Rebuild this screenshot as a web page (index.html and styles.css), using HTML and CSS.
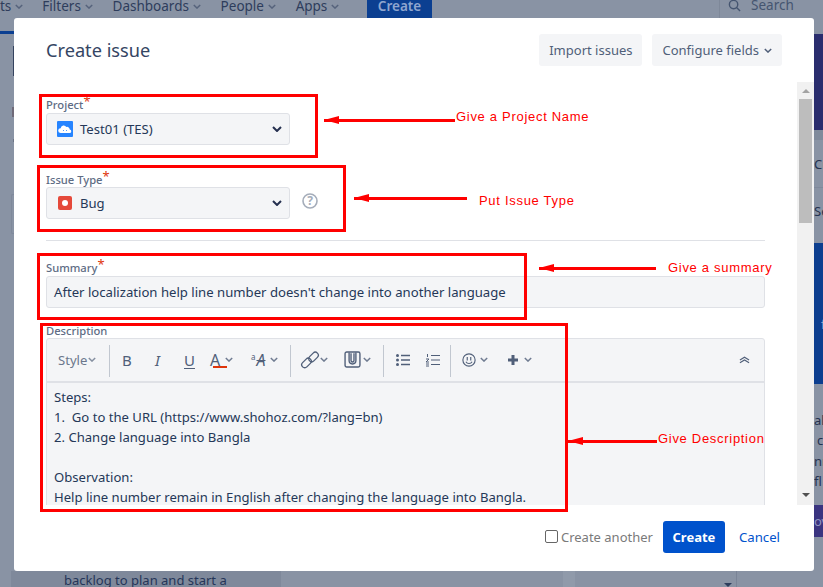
FILE: index.html
```html
<!DOCTYPE html>
<html lang="en">
<head>
<meta charset="utf-8">
<title>Create issue</title>
<link rel="stylesheet" href="styles.css">
</head>
<body>
<header class="topnav">
  <span class="navitem navfirst">ts <svg class="chev" viewBox="0 0 10 6"><path d="M1 1l4 4 4-4"/></svg></span>
  <span class="navitem">Filters <svg class="chev" viewBox="0 0 10 6"><path d="M1 1l4 4 4-4"/></svg></span>
  <span class="navitem">Dashboards <svg class="chev" viewBox="0 0 10 6"><path d="M1 1l4 4 4-4"/></svg></span>
  <span class="navitem">People <svg class="chev" viewBox="0 0 10 6"><path d="M1 1l4 4 4-4"/></svg></span>
  <span class="navitem">Apps <svg class="chev" viewBox="0 0 10 6"><path d="M1 1l4 4 4-4"/></svg></span>
  <span class="navcreate">Create</span>
  <span class="navsearch"><svg class="searchicon" viewBox="0 0 14 14"><circle cx="6" cy="6" r="4.5"/><path d="M9.5 9.5l3.5 3.5"/></svg>Search</span>
</header>
<div class="navline"></div>
<div class="bgbits">
  <span class="bit-left1"></span>
  <span class="bit-left2"></span>
  <span class="bit-left3"></span>
  <span class="bit-left4"></span>
  <span class="bit-panel1"></span>
  <span class="bit-band"></span>
  <span class="bit-text bit-c">Cr</span>
  <span class="bit-rule"></span>
  <span class="bit-text bit-s">Se</span>
  <span class="bit-panel2">f</span>
  <span class="bit-text bit-a">ali</span>
  <span class="bit-text bit-b">c</span>
  <span class="bit-text bit-d">nn</span>
  <span class="bit-text bit-e">fl</span>
  <span class="bit-panel3">ov</span>
  <span class="bit-card">backlog to plan and start a</span>
  <span class="bit-strip"></span>
  <span class="bit-scroll"></span>
  <span class="bit-arrow"></span>
</div>

<main class="modal">
  <div class="modal-head">
    <h1 class="title">Create issue</h1>
    <div class="head-actions">
      <button class="btn">Import issues</button>
      <button class="btn">Configure fields <svg class="chev chev-btn" viewBox="0 0 10 6"><path d="M1 1l4 4 4-4"/></svg></button>
    </div>
  </div>
  <div class="modal-body">
    <div class="form">
      <div class="label lab-project">Project<sup class="req">*</sup></div>
      <div class="select">
        <svg class="ficon" viewBox="0 0 16 16"><rect width="16" height="16" rx="1" fill="#2684ff"/><path d="M3.5 12a2.4 2.4 0 0 1 .2-4.800 3 3 0 0 1 5.600-1.200 2.600 2.600 0 0 1 3.400 2.600 1.700 1.700 0 0 1-.3 3.400z" fill="#fff"/><path d="M6 9.500h.8M9 9.500h.8" stroke="#2684ff" stroke-width="1"/></svg>
        <span class="value">Test01 (TES)</span>
        <svg class="selchev" viewBox="0 0 10 6"><path d="M1 1l4 4 4-4"/></svg>
      </div>
      <div class="label lab-type">Issue Type<sup class="req">*</sup></div>
      <div class="typerow">
        <div class="select">
          <svg class="ficon" viewBox="0 0 16 16"><rect width="14" height="14" x="1" y="1" rx="2" fill="#e5493a"/><circle cx="8" cy="8" r="3" fill="#fff"/></svg>
          <span class="value">Bug</span>
          <svg class="selchev" viewBox="0 0 10 6"><path d="M1 1l4 4 4-4"/></svg>
        </div>
        <svg class="help" viewBox="0 0 16 16"><circle cx="8" cy="8" r="7"/><text x="8" y="12" text-anchor="middle" class="helpq">?</text></svg>
      </div>
      <hr class="rule">
      <div class="label lab-summary">Summary<sup class="req">*</sup></div>
      <div class="input">After localization help line number doesn't change into another language</div>
      <div class="label lab-desc">Description</div>
      <div class="editor">
        <div class="toolbar">
          <span class="tool tool-style">Style<svg class="chev" viewBox="0 0 10 6"><path d="M1 1l4 4 4-4"/></svg></span>
          <i class="sep sep1"></i>
          <span class="tool t-b">B</span>
          <span class="tool t-i">I</span>
          <span class="tool t-u">U</span>
          <span class="tool t-a">A<svg class="chev" viewBox="0 0 10 6"><path d="M1 1l4 4 4-4"/></svg></span>
          <span class="tool t-s"><small>a</small><em>A</em><svg class="chev" viewBox="0 0 10 6"><path d="M1 1l4 4 4-4"/></svg></span>
          <i class="sep sep2"></i>
          <span class="tool t-link"><svg class="ticon link" viewBox="0 0 20 20"><rect x="1" y="10" width="11" height="6" rx="3" transform="rotate(-45 6.500 13)"/><rect x="8" y="4" width="11" height="6" rx="3" transform="rotate(-45 13.500 7)"/></svg><svg class="chev" viewBox="0 0 10 6"><path d="M1 1l4 4 4-4"/></svg></span>
          <span class="tool t-att"><svg class="ticon att" viewBox="0 0 16 16"><rect x="1" y="1" width="14" height="14" rx="1.500"/><path d="M4.800 1.500v7.500a3.200 3.200 0 0 0 6.400 0V1.500M6.600 2v7a1.400 1.400 0 0 0 2.800 0V2"/></svg><svg class="chev" viewBox="0 0 10 6"><path d="M1 1l4 4 4-4"/></svg></span>
          <i class="sep sep3"></i>
          <span class="tool t-ul"><svg class="ticon" viewBox="0 0 16 16"><path d="M6 3.500h9M6 8h9M6 12.500h9"/><circle cx="2.500" cy="3.500" r="1.500" class="dot"/><circle cx="2.500" cy="8" r="1.500" class="dot"/><circle cx="2.500" cy="12.500" r="1.500" class="dot"/></svg></span>
          <span class="tool t-ol"><svg class="ticon" viewBox="0 0 16 16"><path d="M6 3.500h9M6 8h9M6 12.500h9M2.500 2v3M1 7h3l-3 3h3M1 12h3M1 14h3" stroke-width="1"/></svg></span>
          <i class="sep sep4"></i>
          <span class="tool t-emo"><svg class="ticon emo" viewBox="0 0 16 16"><circle cx="8" cy="8" r="7"/><path d="M6 4.500v4M10 4.500v4M4.500 10a4 4 0 0 0 7 0"/></svg><svg class="chev" viewBox="0 0 10 6"><path d="M1 1l4 4 4-4"/></svg></span>
          <span class="tool t-plus"><svg class="ticon plus" viewBox="0 0 12 12"><path d="M6 1v10M1 6h10"/></svg><svg class="chev" viewBox="0 0 10 6"><path d="M1 1l4 4 4-4"/></svg></span>
          <span class="tool t-collapse"><svg class="ticon" viewBox="0 0 12 8"><path d="M1 4l5-3 5 3M1 7l5-3 5 3"/></svg></span>
        </div>
        <div class="content">
          <p>Steps:</p>
          <p>1.&nbsp; Go to the URL (https://www.shohoz.com/?lang=bn)</p>
          <p>2. Change language into Bangla</p>
          <p>&nbsp;</p>
          <p>Observation:</p>
          <p>Help line number remain in English after changing the language into Bangla.</p>
        </div>
      </div>
    </div>
    <div class="scrollbar">
      <span class="arrow-up"></span>
      <span class="thumb"></span>
      <span class="arrow-down"></span>
    </div>
  </div>
  <div class="modal-foot">
    <label class="another"><span class="check"></span>Create another</label>
    <button class="primary">Create</button>
    <a class="cancel">Cancel</a>
  </div>
</main>

<div class="box box-project"></div>
<div class="box box-type"></div>
<div class="box box-summary"></div>
<div class="box box-desc"></div>
<div class="arrow arrow-1"></div>
<div class="arrow arrow-2"></div>
<div class="arrow arrow-3"></div>
<div class="arrow arrow-4"></div>
<span class="note note-1">Give a Project Name</span>
<span class="note note-2">Put Issue Type</span>
<span class="note note-3">Give a summary</span>
<span class="note note-4">Give Description</span>
</body>
</html>
```
FILE: styles.css
```css
* { box-sizing: border-box; }
html, body { margin: 0; height: 100%; }
body {
  position: relative;
  width: 823px;
  height: 587px;
  overflow: hidden;
  background: #8993a4;
  font-family: "Noto Sans", "Open Sans", sans-serif;
  font-size: 13px;
  color: #172b4d;
}
svg { display: block; }

.topnav {
  display: flex;
  align-items: flex-start;
  height: 18px;
  overflow: hidden;
  color: #2e3d5c;
  font-size: 13.5px;
}
.navitem { display: inline-flex; align-items: center; gap: 4px; height: 12px; margin-right: 19.7px; white-space: nowrap; line-height: 12px; }
.navfirst { margin-right: 19px; }
.navitem .chev { opacity: .55; }
.chev { width: 8px; height: 5px; fill: none; stroke: currentColor; stroke-width: 1.8; opacity: .8; flex: none; }
.navcreate {
  margin-left: 8px;
  width: 65px; height: 18px;
  background: #0b3f91; color: #8fa6cf;
  font-weight: 600; text-align: center; line-height: 12px;
}
.navsearch {
  margin-left: 287px;
  height: 18px; padding-left: 8px;
  display: inline-flex; align-items: flex-start; gap: 10px;
  border-left: 1px solid #7e8899;
  color: #455570; line-height: 11px;
}
.searchicon { width: 13px; height: 13px; fill: none; stroke: #455570; stroke-width: 1.5; margin-top: -1px; }
.navline { position: absolute; left: 0; top: 31px; width: 14px; height: 3px; background: #0b3f91; }

.bgbits { position: absolute; inset: 0; }
.bgbits > span { position: absolute; }
.bit-left1 { left: 13px; top: 46px; width: 1px; height: 30px; background: #35435f; }
.bit-left2 { left: 12px; top: 107px; width: 2px; height: 10px; background: #6f6a78; }
.bit-left3 { left: 13px; top: 139px; width: 1px; height: 3px; background: #6b7385; }
.bit-left4 { left: 11px; top: 194px; width: 3px; height: 40px; border: 1px solid #7f899b; border-right: 0; border-radius: 2px 0 0 2px; }
.bit-panel1 { left: 814px; top: 34px; width: 9px; height: 96px; background: #2a2d6e; }
.bit-band { left: 814px; top: 130px; width: 9px; height: 10px; background: #7f8a9b; }
.bit-rule { left: 814px; top: 187px; width: 9px; height: 1px; background: #7f899b; }
.bit-text { color: #25324f; font-size: 13px; line-height: 18px; left: 814px; }
.bit-c { top: 155px; }
.bit-s { top: 202px; }
.bit-panel2 { left: 814px; top: 243px; width: 9px; height: 141px; padding: 72px 0 0 7px; background: #0c3e8f; color: #8fa6cf; font-size: 13px; line-height: 18px; overflow: hidden; }
.bit-a { top: 411px; }
.bit-b { top: 431px; left: 817px; }
.bit-d { top: 452px; }
.bit-e { top: 472px; }
.bit-panel3 { left: 814px; top: 505px; width: 9px; height: 32px; background: #3a3480; color: #8f93c0; font-size: 13px; line-height: 32px; overflow: hidden; }
.bit-card { left: 11px; top: 571px; width: 270px; height: 16px; padding-left: 53px; background: #7f899b; color: #253558; font-size: 13px; line-height: 18px; white-space: nowrap; }
.bit-strip { left: 563px; top: 571px; width: 12px; height: 16px; background: #909aaa; }
.bit-scroll { left: 736px; top: 571px; width: 1px; height: 16px; background: #7a8497; }
.bit-arrow { left: 724px; top: 583px; border: 4px solid transparent; border-top: 4px solid #2e3d5c; border-bottom: 0; }

.modal {
  position: absolute;
  left: 14px; top: 18px;
  width: 800px; height: 553px;
  background: #fff;
  border-radius: 3px;
  display: flex;
  flex-direction: column;
}
.modal-head { height: 64px; padding: 16px 32px; display: flex; justify-content: space-between; align-items: flex-start; }
.title { margin: 0; font-size: 18.2px; font-weight: 400; line-height: 32px; color: #344563; }
.head-actions { display: flex; gap: 10px; }
.btn {
  height: 32px; padding: 0 10px; border: 0; border-radius: 3px;
  background: #f4f5f7; color: #505f79;
  font: 13px "Noto Sans", sans-serif;
  display: inline-flex; align-items: center; gap: 5px;
}
.chev-btn { opacity: 1; }

.modal-body { height: 423px; display: flex; overflow: hidden; }
.form { width: 783px; padding: 0 32px; flex: none; overflow: hidden; font-size: 13.1px; }
.label { color: #5e6c84; font-size: 11.2px; font-weight: 500; line-height: 14px; white-space: nowrap; }
.req { color: #de350b; font-size: 13px; line-height: 0; font-weight: 400; vertical-align: 3px; }
.lab-project { padding-top: 16px; height: 31px; }
.lab-type { margin-top: 28px; height: 14px; }
.select {
  width: 244px; height: 32px;
  display: flex; align-items: center;
  background: #f4f5f7;
  border: 1px solid #dfe1e6;
  border-radius: 3px;
  padding: 0 7px 0 10px;
  color: #253858;
}
.ficon { width: 16px; height: 16px; flex: none; margin-right: 7px; }
.value { flex: 1; }
.selchev { width: 10px; height: 6px; fill: none; stroke: #253050; stroke-width: 2; }
.typerow { display: flex; align-items: center; gap: 12px; }
.help { width: 16px; height: 16px; margin-top: -5px; fill: none; stroke: #a5adba; stroke-width: 1.6; }
.helpq { fill: #a5adba; stroke: none; font: 700 12px "Noto Sans", sans-serif; }
.rule { height: 1px; margin: 21px 0 0; border: 0; background: #dfe1e6; }
.lab-summary { margin-top: 20px; height: 14px; }
.input {
  margin-top: 1px; height: 32px;
  background: #f4f5f7; border: 1px solid #dfe1e6; border-radius: 3px;
  padding: 0 7px; line-height: 30px; color: #253858; font-size: 13.15px;
}
.lab-desc { margin-top: 16px; height: 14px; }
.editor {
  height: 240px;
  background: #f4f5f7;
  border: 1px solid #dfe1e6;
  border-radius: 3px;
}
.toolbar {
  position: relative;
  height: 44px;
  border-bottom: 2px solid #dfe1e6;
  color: #505f79;
}
.tool { position: absolute; top: 0; height: 41px; display: flex; align-items: center; gap: 3px; }
.sep { position: absolute; top: 6px; width: 1px; height: 32px; background: #c1c7d0; }
.sep1 { left: 62px; }
.sep2 { left: 243px; }
.sep3 { left: 336px; }
.sep4 { left: 403px; }
.tool-style { left: 11px; gap: 1px; color: #6b778c; }
.t-b { left: 75px; font-size: 15px; }
.t-i { left: 108px; font-size: 15px; font-style: italic; }
.t-u { left: 137px; font-size: 15px; text-decoration: underline; text-underline-offset: 2px; text-decoration-thickness: 1px; }
.t-a { left: 163px; font-size: 16px; gap: 5px; }
.t-a::after { content: ""; position: absolute; left: 3px; top: 27px; width: 14px; height: 2px; background: #de350b; }
.t-s { left: 204px; gap: 4px; }
.t-s small { font-size: 8px; margin-top: -7px; }
.t-s em { font-size: 16px; margin-left: -3px; text-decoration: line-through; text-decoration-thickness: 1px; }
.ticon { width: 16px; height: 16px; fill: none; stroke: #505f79; stroke-width: 1.3; flex: none; }
.dot { fill: #505f79; stroke: none; }
.plus { width: 12px; height: 12px; stroke-width: 3; margin-right: 2px; }
.link { width: 20px; height: 20px; }
.att { width: 17px; height: 17px; }
.emo { width: 14px; height: 14px; }
.t-link { left: 253px; gap: 0; }
.t-att { left: 297px; gap: 2px; }
.t-ul { left: 348px; }
.t-ol { left: 378px; }
.t-emo { left: 415px; gap: 4px; }
.t-plus { left: 460px; }
.t-collapse { left: 692px; }
.t-collapse .ticon { width: 11px; height: 8px; }
.content { padding: 4px 7px; line-height: 20px; color: #253858; }
.content p { margin: 0; white-space: nowrap; }

.scrollbar {
  width: 17px; height: 423px;
  background: #f1f1f1;
  display: flex; flex-direction: column; align-items: center;
}
.arrow-up { margin-top: 7px; border: 4px solid transparent; border-bottom: 4px solid #a3a3a3; border-top: 0; }
.thumb { margin-top: 6px; width: 13px; height: 124px; background: #bdbdbd; }
.arrow-down { margin-top: auto; margin-bottom: 8px; border: 4px solid transparent; border-top: 4px solid #505050; border-bottom: 0; }

.modal-foot {
  flex: 1;
  display: flex; align-items: center; justify-content: flex-end;
  padding: 0 34px 2px 0;
}
.another { display: inline-flex; align-items: center; gap: 3px; color: #7a7a7a; }
.check { width: 13px; height: 13px; border: 1px solid #666; border-radius: 2px; margin-top: -2px; background: #fff; }
.primary {
  margin-left: 10px; width: 62px; height: 32px;
  background: #0052cc; color: #fff; border: 0; border-radius: 3px;
  font: 700 13px "Noto Sans", sans-serif;
}
.cancel { margin-left: 14px; color: #0052cc; font-size: 13.2px; }

.box { position: absolute; border: 3px solid #ff0000; }
.box-project { left: 39px; top: 94px; width: 279px; height: 64px; }
.box-type { left: 37px; top: 165px; width: 309px; height: 67px; }
.box-summary { left: 37px; top: 253px; width: 490px; height: 67px; }
.box-desc { left: 40px; top: 323px; width: 528px; height: 189px; }

.arrow { position: absolute; height: 3px; background: #ff0000; }
.arrow::before {
  content: ""; position: absolute; left: 0; top: -3px;
  border-style: solid; border-width: 4.5px 15px 4.5px 0;
  border-color: transparent #ff0000 transparent transparent;
}
.arrow-1 { left: 324px; top: 119px; width: 131px; }
.arrow-2 { left: 354px; top: 197px; width: 113px; }
.arrow-3 { left: 539px; top: 267px; width: 117px; }
.arrow-4 { left: 568px; top: 440px; width: 89px; }

.note { position: absolute; color: #ff0000; font-family: "Liberation Sans", sans-serif; font-size: 13px; line-height: 16px; letter-spacing: .7px; white-space: nowrap; }
.note-1 { left: 456px; top: 109px; }
.note-2 { left: 479px; top: 193px; }
.note-3 { left: 668px; top: 260px; }
.note-4 { left: 658px; top: 431px; }
```
